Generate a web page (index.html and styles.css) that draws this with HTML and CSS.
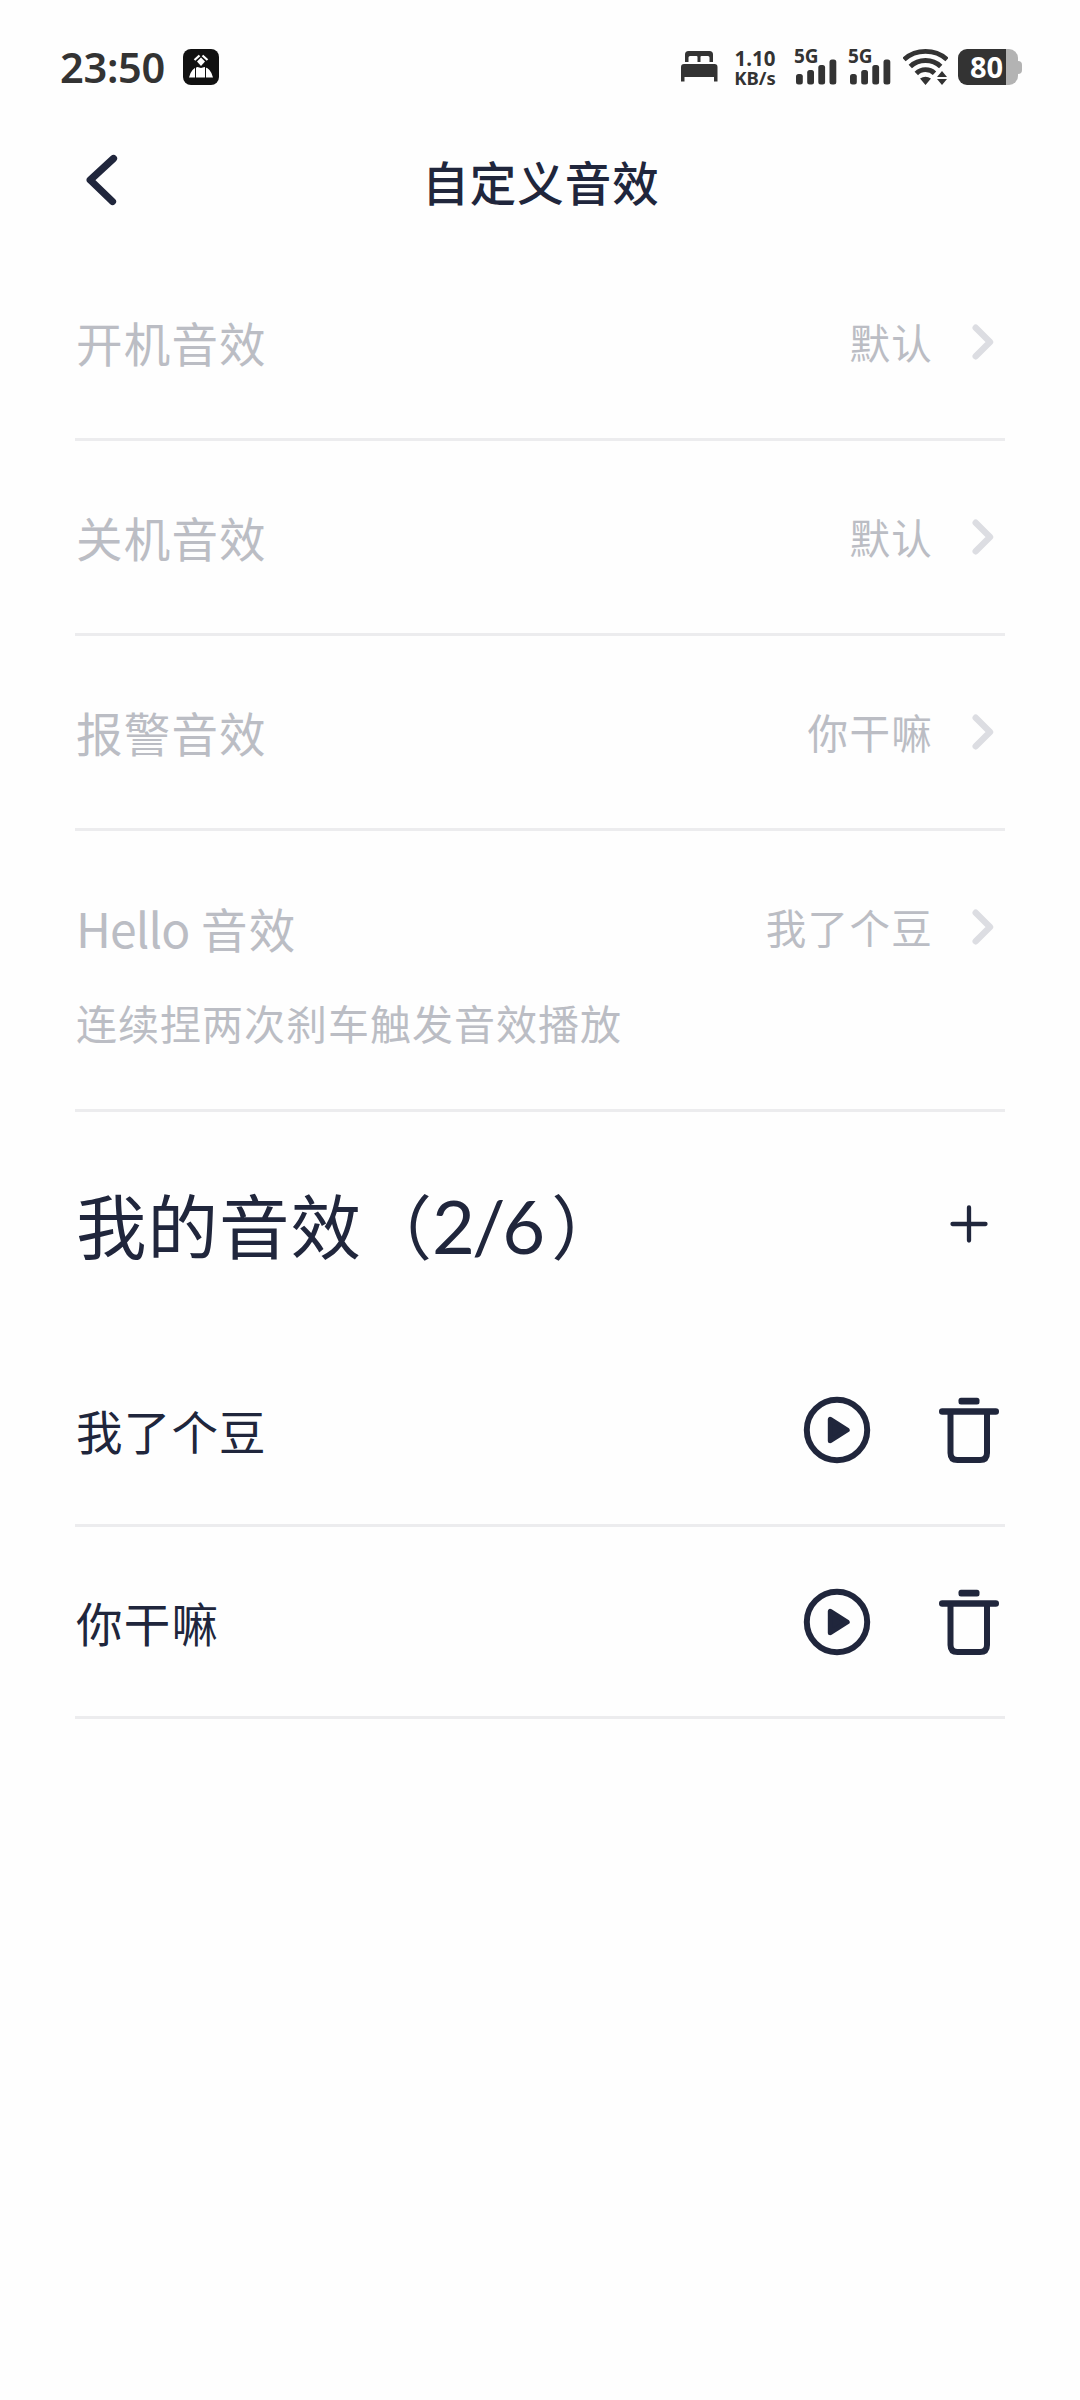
FILE: index.html
```html
<!DOCTYPE html>
<html lang="zh-CN">
<head>
<meta charset="utf-8">
<title>自定义音效</title>
<link rel="stylesheet" href="styles.css">
</head>
<body>
<svg class="defs" width="0" height="0">
  <symbol id="chevron" viewBox="0 0 22 36"><path d="M3.7 3.7 18 18 3.7 32.3" fill="none" stroke="currentColor" stroke-width="6.4" stroke-linecap="round" stroke-linejoin="round"/></symbol>
  <symbol id="play" viewBox="0 0 68 68"><circle cx="34" cy="34" r="30.2" fill="none" stroke="currentColor" stroke-width="6"/><path d="M27.3 23.3v21.4L44.2 34z" fill="currentColor" stroke="currentColor" stroke-width="5" stroke-linejoin="round"/></symbol>
  <symbol id="trash" viewBox="0 0 60 68"><g fill="none" stroke="currentColor" stroke-width="6"><path d="M11.5 15v42q0 7 7 7h22.500q7 0 7-7V15"/><path d="M3.200 15.500h53.600" stroke-width="6.400" stroke-linecap="round"/></g><rect x="19.500" y="1.800" width="21" height="6.600" rx="2.500" fill="currentColor"/></symbol>
  <symbol id="bars" viewBox="0 0 41 26"><g fill="currentColor"><rect x="0" y="15" width="6.800" height="10.500" rx="2.500"/><rect x="11.200" y="11" width="6.800" height="14.500" rx="2.500"/><rect x="22.300" y="6" width="6.800" height="19.500" rx="2.500"/><rect x="33.500" y="0.500" width="6.800" height="25" rx="2.500"/></g></symbol>
</svg>

<header class="status">
  <span class="time">23:50</span>
  <svg class="app" viewBox="0 0 36 36"><rect width="36" height="36" rx="8" fill="#111"/><path d="M6 28.500Q8 19.500 14.500 18l3.500 1 3.500-1Q28 19.500 30 28.500z" fill="#fff"/><path d="M12.500 18v11M22.500 18v11" stroke="#111" stroke-width="1"/><path d="M18 8.500l4 4-4 4.500-4-4.500z" fill="#fff"/><path d="M11.500 11l5-4.500M24.500 11l-5-4.500" stroke="#fff" stroke-width="2.200"/></svg>
  <svg class="bed" viewBox="0 0 37 31" fill="#333"><path d="M4 11V3.500Q4 0 7.500 0h21Q32 0 32 3.500V11h-3.500V6.500Q28.500 5 27 5h-6.500Q19.500 5 19.500 6v5h-3V6Q16.500 5 15.500 5H9Q7.500 5 7.500 6.500V11z"/><path d="M3 13h30.500q3 0 3 3v14.500H33V26H3.500v4.500H0V16q0-3 3-3z"/></svg>
  <div class="speed">1.10<br><span class="unit">KB/s</span></div>
  <div class="signal"><span>5G</span><svg viewBox="0 0 41 26"><use href="#bars"/></svg></div>
  <div class="signal"><span>5G</span><svg viewBox="0 0 41 26"><use href="#bars"/></svg></div>
  <svg class="wifi" viewBox="0 0 45 36"><g fill="none" stroke="#333" stroke-width="4.800"><path d="M1 10.500Q10 2.400 22.500 2.400T44 10.500"/><path d="M7.300 17.500Q13.500 11.500 22.500 11.500T37.700 17.500"/><path d="M13.300 24.500Q17 20.700 22.500 20.700T31.500 24.200"/></g><path d="M17 29.500q5.500-3.500 11 0L22.500 36zM34 28l5-6 5 6zM34 30h10l-5 6z" fill="#333"/></svg>
  <div class="battery"><span>80</span></div>
</header>

<nav class="nav">
  <svg class="back" viewBox="0 0 32 52"><path d="M27.500 4.500 4.200 26 26.500 47.500" fill="none" stroke="currentColor" stroke-width="7.200" stroke-linecap="round" stroke-linejoin="round"/></svg>
  <h1 class="title">自定义音效</h1>
</nav>

<main class="content">
  <section class="settings">
    <div class="setting"><div class="line"><span class="label">开机音效</span><span class="value">默认</span><svg class="chevron"><use href="#chevron"/></svg></div></div>
    <div class="setting"><div class="line"><span class="label">关机音效</span><span class="value">默认</span><svg class="chevron"><use href="#chevron"/></svg></div></div>
    <div class="setting"><div class="line"><span class="label">报警音效</span><span class="value">你干嘛</span><svg class="chevron"><use href="#chevron"/></svg></div></div>
    <div class="setting tall"><div class="line"><span class="label"><span class="latin">Hello</span> 音效</span><span class="value">我了个豆</span><svg class="chevron"><use href="#chevron"/></svg></div><p class="hint">连续捏两次刹车触发音效播放</p></div>
  </section>

  <section>
    <div class="heading">
      <h2>我的音效<span class="paren">（</span><span class="count">2/6</span><span class="paren close">）</span></h2>
      <svg class="plus" viewBox="0 0 38 38"><path d="M19 2.500v33M2.500 19h33" stroke="currentColor" stroke-width="4.300" stroke-linecap="round"/></svg>
    </div>
    <div class="sound"><span class="name">我了个豆</span><svg class="play"><use href="#play"/></svg><svg class="trash"><use href="#trash"/></svg></div>
    <div class="sound"><span class="name">你干嘛</span><svg class="play"><use href="#play"/></svg><svg class="trash"><use href="#trash"/></svg></div>
  </section>
</main>
</body>
</html>
```
FILE: styles.css
```css
* { box-sizing: border-box; margin: 0; padding: 0; }
body {
  width: 1080px;
  min-height: 2400px;
  background: #fefefe;
  color: #20263c;
  font-family: "Noto Sans CJK SC", sans-serif;
}
svg { display: block; flex: none; }
.defs { position: absolute; }

.status {
  display: flex;
  align-items: flex-start;
  height: 120px;
  padding: 49px 59px 0 60px;
  color: #333;
  font-family: "Noto Sans", sans-serif;
}
.time { width: 123px; font-size: 41.500px; line-height: 36px; font-weight: 600; letter-spacing: -0.300px; }
.app { width: 36px; height: 36px; }
.bed { width: 37px; height: 31px; margin: 2px 0 0 462px; }
.speed {
  width: 50px;
  margin-left: 12px;
  text-align: center;
  font-size: 20.5px;
  font-weight: 700;
  line-height: 19px;
}
.unit { font-size: 18.5px; }
.signal { width: 41px; height: 36px; margin: 0 0 0 16px; }
.signal + .signal { margin-left: 13px; }
.signal span {
  display: block;
  height: 10px;
  margin-left: -2px;
  font-size: 19px;
  font-weight: 700;
  line-height: 15px;
}
.signal svg { width: 41px; height: 26px; }
.wifi { width: 45px; height: 36px; margin-left: 12px; }
.battery {
  position: relative;
  width: 60px;
  height: 36px;
  margin-left: 10px;
  border-radius: 9px;
  background: linear-gradient(90deg, #333 47.500px, #b3b3b3 47.500px);
  color: #fff;
  font-size: 29px;
  font-weight: 700;
  line-height: 36px;
  padding-left: 12px;
}
.battery::after {
  content: "";
  position: absolute;
  left: 60px;
  top: 12px;
  width: 4px;
  height: 13px;
  border-radius: 0 4px 4px 0;
  background: #b3b3b3;
}

.nav { display: flex; align-items: center; height: 122px; padding: 0 86px; }
.back { width: 32px; height: 52px; margin-top: -2px; }
.title { flex: 1; margin-right: 30px; text-align: center; font-size: 46.500px; letter-spacing: 1px; font-weight: 500; line-height: 70px; }

.content { padding: 0 75px; }
.setting { height: 195px; padding-top: 61px; border-bottom: 3px solid #ececee; color: #bbbdc4; }
.setting:first-child { height: 199px; padding-top: 65px; }
.tall { height: 281px; }
.line { display: flex; align-items: center; height: 70px; padding-right: 11px; }
.label { flex: 1; padding-left: 1px; font-size: 46.500px; letter-spacing: 1.200px; line-height: 70px; }
.latin { font-size: 48px; letter-spacing: -0.900px; }
.value { font-size: 40.500px; letter-spacing: 1.300px; line-height: 60px; }
.chevron { width: 22px; height: 36px; margin: -1px 0 0 39px; color: #dcdde2; }
.hint { margin-top: 30px; padding-left: 1px; font-size: 41px; letter-spacing: 1px; line-height: 60px; }

.heading { display: flex; align-items: center; justify-content: space-between; height: 223px; padding: 0 17px 0 1px; }
h2 { padding-top: 1px; font-size: 70.500px; letter-spacing: 1px; font-weight: 400; line-height: 100px; }
.paren { letter-spacing: 0; font-size: 70px; }
.close { margin-left: 9px; }
.count { font-family: Lato, sans-serif; font-size: 74px; letter-spacing: -3px; }
.plus { width: 38px; height: 38px; }
.sound { display: flex; align-items: center; height: 192px; border-bottom: 3px solid #ececee; padding: 1px 6px 0 1px; }
.name { flex: 1; font-size: 46.500px; letter-spacing: 1.200px; line-height: 70px; }
.play { width: 68px; height: 68px; margin-right: 68px; }
.trash { width: 60px; height: 68px; }
```
